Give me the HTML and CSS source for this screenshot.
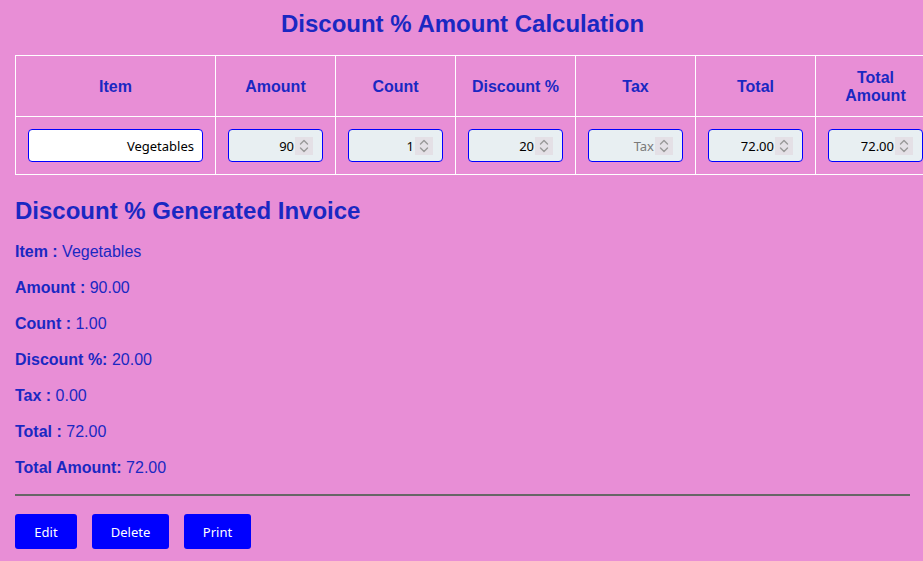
FILE: index.html
```html
<!DOCTYPE html>
<html lang="en">
<head>
<meta charset="utf-8">
<title>Discount % Amount Calculation</title>
<link rel="stylesheet" href="styles.css">
</head>
<body>
<div class="page">
  <h1 class="title">Discount % Amount Calculation</h1>
  <table class="calc">
    <thead>
      <tr>
        <th class="col-item">Item</th>
        <th class="col-num">Amount</th>
        <th class="col-num">Count</th>
        <th class="col-num">Discount %</th>
        <th class="col-num">Tax</th>
        <th class="col-num">Total</th>
        <th class="col-num">Total Amount</th>
      </tr>
    </thead>
    <tbody>
      <tr>
        <td><input class="field field-text" type="text" value="Vegetables"></td>
        <td><input class="field field-num" type="number" value="90"></td>
        <td><input class="field field-num" type="number" value="1"></td>
        <td><input class="field field-num" type="number" value="20"></td>
        <td><input class="field field-num" type="number" placeholder="Tax"></td>
        <td><input class="field field-num" type="number" value="72.00"></td>
        <td><input class="field field-num" type="number" value="72.00"></td>
      </tr>
    </tbody>
  </table>

  <h2 class="subtitle">Discount % Generated Invoice</h2>
  <p class="line"><b>Item :</b> Vegetables</p>
  <p class="line"><b>Amount :</b> 90.00</p>
  <p class="line"><b>Count :</b> 1.00</p>
  <p class="line"><b>Discount %:</b> 20.00</p>
  <p class="line"><b>Tax :</b> 0.00</p>
  <p class="line"><b>Total :</b> 72.00</p>
  <p class="line"><b>Total Amount:</b> 72.00</p>
  <hr class="divider">
  <div class="actions">
    <button class="btn btn-edit">Edit</button>
    <button class="btn btn-delete">Delete</button>
    <button class="btn btn-print">Print</button>
  </div>
</div>
</body>
</html>
```

FILE: styles.css
```css
html {
  overflow: hidden;
}
body {
  margin: 0;
  background: #e88ed6;
  font-family: "Liberation Sans", Arial, sans-serif;
  color: #1a28c2;
}
.page {
  padding: 10px 13px 0 15px;
}
.title {
  margin: 0 0 17px;
  font-size: 24px;
  line-height: 28px;
  text-align: center;
  font-weight: bold;
}
.calc {
  border-collapse: collapse;
  table-layout: fixed;
  width: 920px;
}
.calc th,
.calc td {
  border: 1px solid #ffffff;
  padding: 12px;
  text-align: center;
}
.calc th {
  font-size: 16px;
  line-height: 18px;
  font-weight: bold;
  height: 36px;
  padding-top: 13px;
  padding-bottom: 11px;
}
.col-item {
  width: 175px;
}
.col-num {
  width: 95px;
}
.field {
  display: block;
  box-sizing: border-box;
  height: 33px;
  border: 1px solid #0000ff;
  border-radius: 4px;
  font-family: "Noto Sans", "Open Sans", sans-serif;
  font-size: 13px;
  color: #000;
  text-align: right;
  margin: 0;
}
.field-text {
  width: 175px;
  background: #ffffff;
  padding: 0 8px;
}
.field-num {
  width: 95px;
  background: #e8eff2;
  padding: 0 9px 0 4px;
}
.field-num::placeholder {
  color: #7a7a7a;
}
.field-num::-webkit-inner-spin-button {
  -webkit-appearance: none;
  appearance: none;
  opacity: 1;
  width: 18px;
  height: 18px;
  margin: 0 0 0 1px;
  background-color: #e4e0e6;
  background-image: url("data:image/svg+xml,%3Csvg xmlns='http://www.w3.org/2000/svg' width='18' height='18' viewBox='0 0 18 18'%3E%3Cpath d='M5.5 7 L9 3.5 L12.5 7' fill='none' stroke='%23999' stroke-width='1.4' stroke-linecap='round' stroke-linejoin='round'/%3E%3Cpath d='M5.5 11 L9 14.5 L12.5 11' fill='none' stroke='%23999' stroke-width='1.4' stroke-linecap='round' stroke-linejoin='round'/%3E%3C/svg%3E");
  background-repeat: no-repeat;
  background-position: center;
  cursor: default;
}
.subtitle {
  margin: 22px 0 0;
  font-size: 24px;
  line-height: 28px;
  font-weight: bold;
}
.line {
  margin: 17px 0 0;
  font-size: 16px;
  line-height: 19px;
}
.line b {
  font-weight: bold;
}
.divider {
  margin: 17px 0 0;
  border: 0;
  border-top: 2px solid #666666;
  height: 0;
}
.actions {
  display: flex;
  gap: 15px;
  margin-top: 18px;
}
.btn {
  height: 35px;
  border: 0;
  border-radius: 3px;
  background: #0000ff;
  color: #ffffff;
  font-family: "Noto Sans", "Open Sans", sans-serif;
  font-size: 13px;
  padding: 0;
  text-align: center;
}
.btn-edit {
  width: 62px;
}
.btn-delete {
  width: 77px;
}
.btn-print {
  width: 67px;
}
```
